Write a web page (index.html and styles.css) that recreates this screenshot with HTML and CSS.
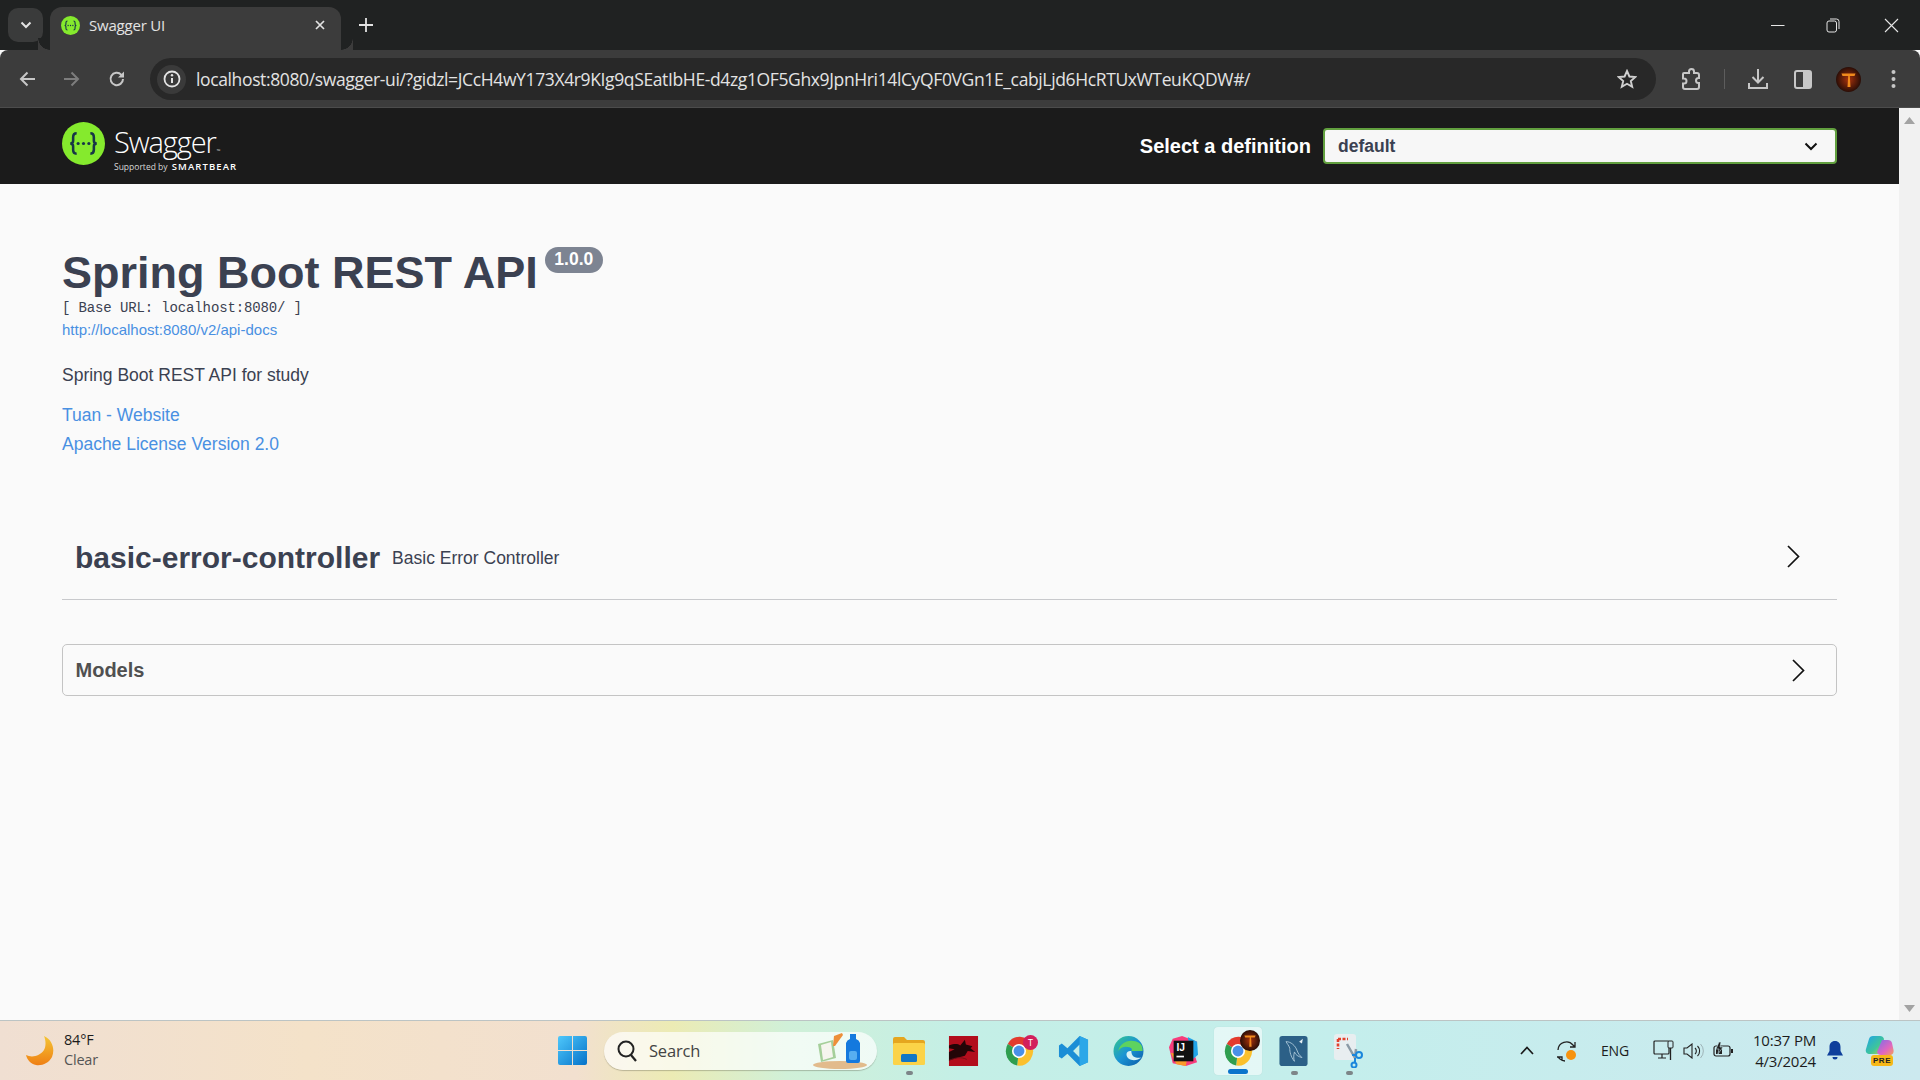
FILE: index.html
```html
<!DOCTYPE html>
<html lang="en">
<head>
<meta charset="utf-8">
<title>Swagger UI</title>
<link rel="stylesheet" href="styles.css">
</head>
<body>
<svg class="defs" width="0" height="0" aria-hidden="true">
  <defs>
    <symbol id="swag" viewBox="0 0 44 44">
      <circle cx="22" cy="22" r="22" fill="#85ea2d"/>
      <path d="M15 11.500c-3.200 0-3.600 1.600-3.600 4v3.600c0 2-1 2.900-3 2.900 2 0 3 .9 3 2.900v3.600c0 2.400.4 4 3.600 4M29 11.500c3.200 0 3.600 1.600 3.600 4v3.600c0 2 1 2.900 3 2.900-2 0-3 .9-3 2.900v3.600c0 2.400-.4 4-3.600 4" fill="none" stroke="#173647" stroke-width="2.600"/>
      <circle cx="16.500" cy="22" r="1.600" fill="#173647"/><circle cx="22" cy="22" r="1.600" fill="#173647"/><circle cx="27.500" cy="22" r="1.600" fill="#173647"/>
    </symbol>
    <symbol id="chromeicon" viewBox="0 0 32 32">
      <path d="M16 16 4 8.500A14.500 15.500 0 0 1 29.500 9.500Z" fill="#e33b2e"/>
      <path d="M16 16 29.500 9.500A15 15.500 0 0 1 14 31.500Z" fill="#fbc02d"/>
      <path d="M16 16 14 31.500A15 15.500 0 0 1 4 8.500Z" fill="#2f9e4f"/>
      <circle cx="16" cy="16" r="7.500" fill="#fff"/><circle cx="16" cy="16" r="5.800" fill="#4a90e8"/>
    </symbol>
    <radialGradient id="avatarfill" cx=".5" cy=".5" r=".55"><stop offset="0" stop-color="#a8320c"/><stop offset="1" stop-color="#1d0a06"/></radialGradient>
    <linearGradient id="moon" x1="0" y1="0" x2="0" y2="1"><stop offset="0" stop-color="#f4c534"/><stop offset="1" stop-color="#ef7f14"/></linearGradient>
    <linearGradient id="winblue" x1="0" y1="0" x2="1" y2="1"><stop offset="0" stop-color="#4fc8fb"/><stop offset="1" stop-color="#0572c9"/></linearGradient>
    <linearGradient id="edgeg" x1="0" y1="0" x2="1" y2="1"><stop offset="0" stop-color="#37c98b"/><stop offset=".5" stop-color="#1a93d4"/><stop offset="1" stop-color="#0c5aa6"/></linearGradient>
    <linearGradient id="copl" x1="0" y1="0" x2="1" y2="1"><stop offset="0" stop-color="#1fa3e8"/><stop offset=".6" stop-color="#3fc59a"/><stop offset="1" stop-color="#c8d845"/></linearGradient>
    <linearGradient id="copr" x1="0" y1="0" x2="1" y2="1"><stop offset="0" stop-color="#7a6fe8"/><stop offset=".6" stop-color="#e066c0"/><stop offset="1" stop-color="#f4a05a"/></linearGradient>
  </defs>
</svg>

<div class="tabstrip">
  <button class="tablist" type="button">
    <svg width="12" height="8" viewBox="0 0 12 8"><path d="M1.500 1.500 6 6l4.500-4.500" fill="none" stroke="#e3e3e3" stroke-width="2"/></svg>
  </button>
  <div class="tab">
    <svg class="favicon" width="19" height="19"><use href="#swag"/></svg>
    <span class="tabtitle">Swagger UI</span>
    <svg class="tabclose" width="10" height="10" viewBox="0 0 10 10"><path d="M1 1l8 8M9 1 1 9" stroke="#e3e3e3" stroke-width="1.700"/></svg>
  </div>
  <svg class="newtab" width="14" height="14" viewBox="0 0 14 14"><path d="M7 0v14M0 7h14" stroke="#e3e3e3" stroke-width="1.800"/></svg>
  <div class="winctrls">
    <svg width="14" height="14" viewBox="0 0 14 14"><path d="M0 7.500h13.500" stroke="#e6e6e6" stroke-width="1"/></svg>
    <svg class="win-restore" width="14" height="16" viewBox="0 0 14 16"><rect x="1" y="4" width="9.500" height="11" rx="2" fill="none" stroke="#e6e6e6"/><path d="M4 2h6.500a2.500 2.500 0 0 1 2.500 2.500V12" fill="none" stroke="#e6e6e6"/></svg>
    <svg width="15" height="15" viewBox="0 0 15 15"><path d="M1 1l13 13M14 1 1 14" stroke="#e6e6e6" stroke-width="1.100"/></svg>
  </div>
</div>

<div class="toolbar">
  <div class="navbtns">
    <svg width="18" height="18" viewBox="0 0 18 18"><path d="M17 9H3M9.500 2.500 3 9l6.500 6.500" fill="none" stroke="#c7c7c7" stroke-width="2"/></svg>
    <svg width="18" height="18" viewBox="0 0 18 18"><path d="M1 9h14M8.500 2.500 15 9l-6.500 6.500" fill="none" stroke="#7d7d7d" stroke-width="2"/></svg>
    <svg width="18" height="18" viewBox="0 0 18 18"><path d="M15 9a6.200 6.200 0 1 1-1.800-4.400L15 6.500" fill="none" stroke="#c7c7c7" stroke-width="2"/><path d="M16 1.500v6h-6z" fill="#c7c7c7"/></svg>
  </div>
  <div class="omnibox">
    <span class="siteinfo">
      <svg width="18" height="18" viewBox="0 0 18 18"><circle cx="9" cy="9" r="7.500" fill="none" stroke="#e3e3e3" stroke-width="1.800"/><path d="M9 8v5" stroke="#e3e3e3" stroke-width="2"/><circle cx="9" cy="5.300" r="1.200" fill="#e3e3e3"/></svg>
    </span>
    <span class="url">localhost:8080/swagger-ui/?gidzl=JCcH4wY173X4r9KIg9qSEatIbHE-d4zg1OF5Ghx9JpnHri14lCyQF0VGn1E_cabjLjd6HcRTUxWTeuKQDW#/</span>
    <svg class="star" width="20" height="20" viewBox="0 0 20 20"><path d="M10 2l2.400 5.500 6 .5-4.600 4 1.400 5.900L10 14.800l-5.200 3.100L6.200 12 1.600 8l6-.5z" fill="none" stroke="#d0d0d0" stroke-width="1.900"/></svg>
  </div>
  <div class="tools">
    <svg class="tool-ext" width="22" height="24" viewBox="0 0 22 24"><path d="M4 6h5V4.500a2.500 2.500 0 0 1 5 0V6h3a2 2 0 0 1 2 2v3h-.5a2.500 2.500 0 0 0 0 5h.5v4a2 2 0 0 1-2 2H5a2 2 0 0 1-2-2v-3.500h1a2.500 2.500 0 0 0 0-5H3V7a1 1 0 0 1 1-1z" fill="none" stroke="#c7c7c7" stroke-width="2"/></svg>
    <span class="tool-sep"></span>
    <svg class="tool-dl" width="22" height="22" viewBox="0 0 22 22"><path d="M11 1v13M5.500 9 11 14.500 16.500 9" fill="none" stroke="#c7c7c7" stroke-width="2"/><path d="M2 15v5h18v-5" fill="none" stroke="#c7c7c7" stroke-width="2"/></svg>
    <svg class="tool-panel" width="18" height="19" viewBox="0 0 18 19"><rect x="1" y="1" width="16" height="17" rx="2" fill="none" stroke="#c7c7c7" stroke-width="2"/><rect x="9" y="1" width="8" height="17" fill="#c7c7c7"/></svg>
    <svg class="tool-avatar" width="25" height="25" viewBox="0 0 25 25"><circle cx="12.500" cy="12.500" r="12.500" fill="url(#avatarfill)"/><path d="M5.500 6.500h14l-1 2.500h-4.700l.7 11h-3l.7-11H6.500z" fill="#f08a1c"/></svg>
    <svg class="tool-dots" width="5" height="20" viewBox="0 0 5 20"><circle cx="2.500" cy="3" r="2" fill="#c7c7c7"/><circle cx="2.500" cy="10" r="2" fill="#c7c7c7"/><circle cx="2.500" cy="17" r="2" fill="#c7c7c7"/></svg>
  </div>
</div>

<div class="viewport">
  <div class="page">
    <header class="topbar">
      <div class="logo">
        <svg class="logomark" width="43" height="43"><use href="#swag"/></svg>
        <div class="logotext">
          <span class="logoname">Swagger<small class="tm">™</small></span>
          <span class="logosub">Supported by <b>SMARTBEAR</b></span>
        </div>
      </div>
      <div class="defsel">
        <span class="deflabel">Select a definition</span>
        <div class="defbox">
          <span>default</span>
          <svg width="14" height="9" viewBox="0 0 14 9"><path d="M1.500 1.500 7 7l5.500-5.500" fill="none" stroke="#111" stroke-width="2"/></svg>
        </div>
      </div>
    </header>

    <main class="content">
      <div class="titlerow">
        <h1 class="title">Spring Boot REST API</h1>
        <span class="version">1.0.0</span>
      </div>
      <p class="baseurl">[ Base URL: localhost:8080/ ]</p>
      <a class="specurl" href="#">http://localhost:8080/v2/api-docs</a>
      <p class="desc">Spring Boot REST API for study</p>
      <a class="infolink first" href="#">Tuan - Website</a>
      <a class="infolink" href="#">Apache License Version 2.0</a>

      <section class="opblock">
        <h2 class="tagname">basic-error-controller</h2>
        <span class="tagdesc">Basic Error Controller</span>
        <svg class="chev" width="13" height="23" viewBox="0 0 13 23"><path d="M1 1l10.500 10.500L1 22" fill="none" stroke="#111" stroke-width="1.700"/></svg>
      </section>

      <section class="models">
        <h3 class="modelsname">Models</h3>
        <svg class="chev" width="13" height="23" viewBox="0 0 13 23"><path d="M1 1l10.500 10.500L1 22" fill="none" stroke="#111" stroke-width="1.700"/></svg>
      </section>
    </main>
  </div>
  <div class="scrollbar">
    <svg width="11" height="7" viewBox="0 0 11 7"><path d="M5.500 0 11 7H0z" fill="#a3a3a3"/></svg>
    <svg width="11" height="7" viewBox="0 0 11 7"><path d="M5.500 7 11 0H0z" fill="#a3a3a3"/></svg>
  </div>
</div>

<footer class="taskbar">
  <div class="weather">
    <svg width="28" height="30" viewBox="0 0 28 30"><path d="M18 0c9 4 11 14 8 21-3 6-10 9-16 8C5 28 1 24 0 19c6 3 14 1 18-5 2-4 2-9 0-14z" fill="url(#moon)"/></svg>
    <div class="weathertext"><span class="temp">84°F</span><span class="cond">Clear</span></div>
  </div>
  <div class="center">
    <svg class="winlogo" width="29" height="29" viewBox="0 0 29 29"><path d="M0 2a2 2 0 0 1 2-2h12v14H0zM15 0h12a2 2 0 0 1 2 2v12H15zM0 15h14v14H2a2 2 0 0 1-2-2zM15 15h14v12a2 2 0 0 1-2 2H15z" fill="url(#winblue)"/></svg>
    <div class="search">
      <svg width="22" height="24" viewBox="0 0 22 24"><circle cx="10" cy="10" r="7.500" fill="none" stroke="#222" stroke-width="2"/><path d="M15 16l5 6" stroke="#222" stroke-width="2.200"/></svg>
      <span class="searchtext">Search</span>
      <svg class="searchart" width="60" height="36" viewBox="0 0 60 36"><ellipse cx="30" cy="32" rx="27" ry="4" fill="#e2bb8c"/><path d="M8 11 23 7l3 18-15 4z" fill="#a5cf9a"/><path d="M11 12l10-3 2 15-10 3z" fill="#f5f5ee"/><path d="M24 3 32 0l1 2-8 11-2 0z" fill="#ed8f3a"/><path d="M36 10a6 6 0 0 1 4-4V1h6v5a6 6 0 0 1 4 4v18a2 2 0 0 1-2 2H38a2 2 0 0 1-2-2z" fill="#1479de"/><rect x="39" y="18" width="8" height="9" rx="2" fill="#57aef0"/></svg>
    </div>
    <div class="apps">
      <div class="app">
        <svg width="32" height="29" viewBox="0 0 32 29"><path d="M0 3a2 2 0 0 1 2-2h9l3 3h16a2 2 0 0 1 2 2v4H0z" fill="#e5a61f"/><rect y="7" width="32" height="22" rx="1.500" fill="#fbd348"/><rect x="8" y="18" width="16" height="8" rx="1.500" fill="#1277c5"/></svg>
        <i class="dot"></i>
      </div>
      <div class="app">
        <svg width="31" height="30" viewBox="0 0 31 32"><rect width="31" height="32" fill="#b20d1c"/><path d="M0 10c6-2 9-2 12 0l5-6 1 5 7 2-2 2 5 4-8-1-3 5-7 2-10 3v-9l6-3-6-1z" fill="#230507"/><path d="M0 26c7-3 13-4 19-1" stroke="#701018" fill="none"/></svg>
      </div>
      <div class="app">
        <svg class="badgeicon" width="30" height="30"><use href="#chromeicon"/></svg>
        <span class="appbadge">T</span>
      </div>
      <div class="app">
        <svg width="31" height="30" viewBox="0 0 31 32"><path d="M22 0 31 4v24l-9 4-13-13-6 5-3-2V10l3-2 6 5zM22 9l-7 7 7 7z" fill="#1b8ed6"/><path d="M22 0 31 4v24l-9 4z" fill="#2ca7e8"/></svg>
      </div>
      <div class="app">
        <svg width="31" height="30" viewBox="0 0 32 32"><circle cx="16" cy="16" r="16" fill="url(#edgeg)"/><path d="M31 14c0-6-6-9-12-9C12 5 6 10 5 16c3-5 8-5 12-4 3 1 3 3 2 4h12z" fill="#5ed25f"/><path d="M19 16c-5-1-7 4-3 8 4 3 10 2 14-1-5 1-11 0-11-7z" fill="#d6f2f5"/></svg>
      </div>
      <div class="app">
        <svg width="31" height="30" viewBox="0 0 31 32"><path d="M4 3 14 0l16 6-2 16 2 6-12 4-14-3L0 12z" fill="#f73d7c"/><path d="M20 1 30 6l1 14-6 5z" fill="#20a4e8"/><path d="M2 18 8 30l10 2 2-12z" fill="#fb9a29"/><rect x="5" y="5" width="21" height="22" fill="#111"/><text x="8" y="16" class="ijtext">IJ</text><rect x="8" y="21" width="8" height="1.800" fill="#fff"/></svg>
      </div>
      <div class="app active">
        <svg class="badgeicon" width="30" height="30"><use href="#chromeicon"/></svg>
        <svg class="avbadge" width="20" height="21" viewBox="0 0 25 25" preserveAspectRatio="none"><circle cx="12.500" cy="12.500" r="12.500" fill="url(#avatarfill)"/><path d="M5.500 6.500h14l-1 2.500h-4.700l.7 11h-3l.7-11H6.500z" fill="#f08a1c"/></svg>
        <i class="bar"></i>
      </div>
      <div class="app">
        <svg width="29" height="30" viewBox="0 0 30 32"><rect width="30" height="32" rx="3" fill="#2c6087"/><path d="M7 6c5 0 10 4 12 10 1 3 3 5 5 7-4-1-7-3-8-6-1 4-1 7 0 10-4-5-5-10-5-14-1-3-3-5-4-7z" fill="none" stroke="#a7c4d6" stroke-width="1"/><path d="M21 6l4-3-1 5z" fill="#e6eef3"/></svg>
        <i class="dot"></i>
      </div>
      <div class="app">
        <svg width="30" height="34" viewBox="0 0 30 34"><rect width="22" height="26" rx="3" fill="#e8eef0"/><path d="M4 5h10M4 5v10" stroke="#e2402c" stroke-width="2.600" stroke-dasharray="3 1.500" fill="none"/><path d="M13 10 21 24M22 15l-1 9" stroke="#8b9aa5" stroke-width="2.500"/><circle cx="25" cy="21" r="3" fill="none" stroke="#1a86dc" stroke-width="2"/><circle cx="20" cy="31" r="2.500" fill="none" stroke="#1a86dc" stroke-width="2"/><path d="M18 21h5M21 24v5" stroke="#1a86dc" stroke-width="2"/></svg>
        <i class="dot"></i>
      </div>
    </div>
  </div>
  <div class="tray">
    <svg class="tray-up" width="14" height="9" viewBox="0 0 14 9"><path d="M1 8l6-6.500L13 8" fill="none" stroke="#1a1a1a" stroke-width="1.700"/></svg>
    <svg class="tray-sync" width="22" height="22" viewBox="0 0 22 22"><path d="M2 10a8.500 8.500 0 0 1 15-5l2 2M19 2v5h-5M1 17h5v4M2 17l2 2a8.500 8.500 0 0 0 5 2" fill="none" stroke="#222" stroke-width="1.300"/><circle cx="15" cy="15" r="5" fill="#f7930f"/></svg>
    <span class="tray-lang">ENG</span>
    <svg class="tray-net" width="21" height="21" viewBox="0 0 21 21"><rect x="1" y="1" width="15" height="13" rx="1" fill="none" stroke="#222" stroke-width="1.200"/><path d="M5 18h8M9 14v4" stroke="#222" stroke-width="1.200"/><rect x="15" y="1" width="5" height="7" rx="1" fill="#cbe9ef" stroke="#222"/><path d="M17.500 8v12" stroke="#222" stroke-width="1.300"/></svg>
    <svg class="tray-vol" width="21" height="16" viewBox="0 0 21 16"><path d="M1 5h3l5-4v14l-5-4H1z" fill="none" stroke="#222" stroke-width="1.100"/><path d="M12 5a4 4 0 0 1 0 6M14.500 3a7 7 0 0 1 0 10" fill="none" stroke="#222" stroke-width="1.100"/><path d="M17.500 1a10 10 0 0 1 0 14" fill="none" stroke="#9fb4b8"/></svg>
    <svg class="tray-bat" width="21" height="17" viewBox="0 0 21 17"><rect x="1" y="4" width="16" height="10" rx="2" fill="none" stroke="#222" stroke-width="1.200"/><rect x="3" y="6" width="6" height="6" fill="#222"/><path d="M18 7h2v4h-2z" fill="#222"/><path d="M6 0 3 7h3l-1 5 5-7H7l1-5z" fill="#222" stroke="#cbe9ef" stroke-width=".6"/></svg>
    <div class="clock"><span>10:37 PM</span><span>4/3/2024</span></div>
    <svg class="tray-bell" width="16" height="19" viewBox="0 0 16 19"><path d="M8 0c3.500 0 5.500 2.500 5.500 6v4l2.500 4.500H0L2.500 10V6C2.500 2.500 4.500 0 8 0z" fill="#0f3f9c"/><path d="M5.500 16h5a2.500 2.500 0 0 1-5 0z" fill="#0f3f9c"/></svg>
    <div class="copilot">
      <svg width="29" height="24" viewBox="0 0 29 24"><path d="M8 0h7c2 0 3.500 1 4 3l-3 12c-.5 2-2 3-4 3H5c-3 0-5-2-4-5L4 3C4.500 1 6 0 8 0z" fill="url(#copl)"/><path d="M17 4h6c2 0 3.500 1 4 3l1.500 7c.5 3-1 5-4 5H16c-2 0-3.500-1-4-3z" fill="url(#copr)"/></svg>
      <span class="prebadge">PRE</span>
    </div>
  </div>
</footer>
</body>
</html>
```

FILE: styles.css
```css
* { box-sizing: border-box; }
html, body { margin: 0; padding: 0; height: 100%; }
body {
  width: 1920px;
  height: 1080px;
  overflow: hidden;
  display: flex;
  flex-direction: column;
  font-family: "Liberation Sans", Arial, sans-serif;
  background: #fafafa;
}
.defs { display: block; height: 0; }

/* browser chrome */
.tabstrip {
  height: 50px;
  flex: none;
  background: #202222;
  display: flex;
  align-items: flex-end;
  padding-left: 8px;
  position: relative;
}
.tablist {
  width: 35px;
  height: 34px;
  margin-bottom: 8px;
  border: 0;
  border-radius: 10px;
  background: #3a3b3b;
  display: flex;
  align-items: center;
  justify-content: center;
  padding: 0;
}
.tab {
  width: 291px;
  height: 43px;
  margin-left: 7px;
  background: #3c3c3c;
  border-radius: 12px 12px 0 0;
  display: flex;
  align-items: center;
  padding: 0 16px 7px 11px;
  color: #e3e3e3;
  position: relative;
}
.tab::before, .tab::after {
  content: "";
  position: absolute;
  bottom: 0;
  width: 12px;
  height: 12px;
  background: radial-gradient(circle at 0 0, #202222 11.5px, #3c3c3c 12px);
}
.tab::before { left: -12px; transform: scaleX(-1); }
.tab::after { right: -12px; }
.favicon { flex: none; }
.tabtitle {
  margin-left: 9px;
  flex: 1;
  font: 15px "Open Sans", sans-serif;
  letter-spacing: -0.2px;
}
.newtab { margin: 0 0 18px 18px; flex: none; }
.winctrls {
  margin-left: auto;
  display: flex;
  align-items: center;
  gap: 41px;
  height: 50px;
  padding: 0 21px 0 0;
  align-self: flex-start;
}
.win-restore { margin-right: 3px; }

.toolbar {
  height: 58px;
  flex: none;
  background: #3c3c3c;
  border-bottom: 1px solid #4c4c4c;
  border-top-left-radius: 8px;
  border-top-right-radius: 8px;
  display: flex;
  align-items: center;
  padding: 1px 0 0 18px;
}
.navbtns { display: flex; gap: 27px; align-items: center; flex: none; width: 132px; }
.omnibox {
  width: 1506px;
  height: 42px;
  background: #282828;
  border-radius: 21px;
  display: flex;
  align-items: center;
  padding: 0 19px 0 7px;
  flex: none;
}
.siteinfo {
  width: 29px;
  height: 29px;
  border-radius: 50%;
  background: #3a3a3a;
  display: flex;
  align-items: center;
  justify-content: center;
  flex: none;
}
.url {
  margin-left: 10px;
  flex: 1;
  font: 17.500px "Open Sans", sans-serif;
  letter-spacing: -0.37px;
  color: #e3e3e3;
  white-space: nowrap;
}
.star { flex: none; }
.tools { display: flex; align-items: center; flex: none; padding-left: 24px; }
.tool-sep { width: 1px; height: 20px; background: #5d5d5d; margin: 0 22px 0 22px; }
.tool-panel { margin-left: 25px; }
.tool-avatar { margin-left: 24px; }
.tool-dots { margin-left: 30px; }

/* page */
.viewport { flex: 1; display: flex; min-height: 0; }
.page { flex: 1; min-width: 0; background: #fafafa; color: #3b4151; }
.scrollbar {
  width: 21px;
  flex: none;
  background: #f1f1f1;
  display: flex;
  flex-direction: column;
  align-items: center;
  justify-content: space-between;
  padding: 9px 0 8px;
}
.topbar {
  height: 76px;
  background: #1b1b1b;
  display: flex;
  align-items: center;
  justify-content: space-between;
  padding: 0 62px 0 62px;
}
.logo { display: flex; align-items: center; gap: 9px; }
.logomark { display: block; margin-bottom: 5px; }
.logotext { display: flex; flex-direction: column; color: #fff; margin-top: 12px; }
.logoname { font: 300 29px/20px "Open Sans", sans-serif; letter-spacing: -1.100px; }
.tm { font-size: 5px; vertical-align: baseline; margin-left: 1px; }
.logosub { font: 8.500px/11px "Open Sans", sans-serif; color: #d8d8d8; }
.logosub b { font-size: 9.500px; font-weight: 600; letter-spacing: 1.100px; color: #fff; margin-left: 2px; }
.defsel { display: flex; align-items: center; gap: 12px; }
.deflabel { font-weight: 700; font-size: 20px; color: #fff; }
.defbox {
  width: 514px;
  height: 36px;
  background: #f7f7f7;
  border: 2px solid #62a03f;
  border-radius: 4px;
  display: flex;
  align-items: center;
  justify-content: space-between;
  padding: 0 17px 0 13px;
  font-weight: 700;
  font-size: 17.500px;
  color: #3b4151;
}
.content { padding: 0 0 0 62px; width: 1837px; }
.titlerow { display: flex; align-items: flex-start; margin-top: 65px; height: 48px; }
.title { margin: 0; font-size: 45px; line-height: 48px; font-weight: 700; color: #3b4151; }
.version {
  margin: -2px 0 0 7px;
  width: 58px;
  height: 26px;
  border-radius: 13px;
  background: #7d8492;
  color: #fff;
  font-weight: 700;
  font-size: 17.500px;
  line-height: 24px;
  text-align: center;
}
.baseurl {
  margin: 0;
  height: 21.500px;
  font: 14px/22px "Liberation Mono", monospace;
  letter-spacing: -0.13px;
  color: #3b4151;
}
.specurl { display: block; font-size: 15px; line-height: 22px; color: #4990e2; text-decoration: none; }
.desc { margin: 22px 0 0; font-size: 17.500px; line-height: 24px; color: #3b4151; }
.infolink { display: block; font-size: 17.500px; line-height: 29px; color: #4990e2; text-decoration: none; }
.infolink.first { margin-top: 14px; }
.opblock {
  margin-top: 58.500px;
  height: 83px;
  border-bottom: 1px solid #c8c9cc;
  display: flex;
  align-items: center;
  padding: 0 0 0 13px;
  width: 1775px;
}
.tagname { margin: 0; font-size: 30px; font-weight: 700; color: #3b4151; line-height: 40px; }
.tagdesc { margin-left: 12px; font-size: 17.500px; color: #3b4151; }
.opblock .chev { margin-left: auto; margin-right: 37px; margin-top: -4px; }
.models {
  margin-top: 44px;
  height: 52px;
  width: 1775px;
  border: 1px solid #c4c4c4;
  border-radius: 5px;
  display: flex;
  align-items: center;
  padding: 0 31px 0 12.500px;
  justify-content: space-between;
}
.modelsname { margin: 0; font-size: 20px; font-weight: 700; color: #505050; }

/* taskbar */
.taskbar {
  height: 60px;
  flex: none;
  display: flex;
  align-items: center;
  border-top: 1px solid #bcc4c4;
  background: linear-gradient(90deg, #f0dfd2 0, #f4e2c9 16%, #f2e0cf 30%, #ecebb4 35%, #d0f0d8 41%, #c4efe6 50%, #c4eeec 70%, #cce9ef 100%);
  color: #1c1c1c;
  font-family: "Open Sans", sans-serif;
}
.weather { display: flex; align-items: center; width: 558px; padding-left: 26px; flex: none; }
.weathertext { display: flex; flex-direction: column; margin-left: 10px; font-size: 14.500px; line-height: 19.500px; letter-spacing: -.2px; margin-top: -2px; }
.cond { color: #555; }
.center { display: flex; align-items: center; flex: none; }
.search {
  margin-left: 17px;
  width: 273px;
  height: 38px;
  border-radius: 19px;
  background: rgba(255,255,255,.7);
  box-shadow: 0 1px 1px rgba(90,90,70,.35);
  display: flex;
  align-items: center;
  padding: 0 7px 0 12px;
  flex: none;
}
.searchtext { margin-left: 11px; font-size: 16.500px; color: #444; letter-spacing: -.2px; flex: 1; }
.apps { display: flex; margin-left: 4px; }
.app {
  width: 55px;
  height: 48px;
  display: flex;
  align-items: center;
  justify-content: center;
  position: relative;
}
.app svg { display: block; }
.dot {
  position: absolute;
  left: 50%;
  bottom: 0;
  width: 7px;
  height: 4px;
  margin-left: -3px;
  border-radius: 2px;
  background: #7d8588;
}
.active { background: rgba(255,255,255,.55); border-radius: 4px; width: 48px; margin: 0 4px 0 3px; box-shadow: 0 0 1px rgba(0,0,0,.15); }
.bar {
  position: absolute;
  left: 14px;
  bottom: 1px;
  width: 20px;
  height: 5px;
  border-radius: 3px;
  background: #0a74cc;
}
.badgeicon { position: relative; }
.appbadge {
  position: absolute;
  top: 8px;
  right: 8px;
  width: 15px;
  height: 15px;
  border-radius: 50%;
  background: #d21f5c;
  color: #fff;
  font: 9px/15px "Open Sans", sans-serif;
  text-align: center;
}
.avbadge { position: absolute; top: 3px; right: 2px; }
.ijtext { font: 700 11px "Liberation Sans", sans-serif; fill: #fff; }
.tray { display: flex; align-items: center; flex: 1; padding-left: 144px; }
.tray-sync { margin-left: 22px; }
.tray-lang { margin-left: 23px; font-size: 14px; letter-spacing: -.2px; width: 36px; }
.tray-net { margin-left: 16px; }
.tray-vol { margin-left: 9px; }
.tray-bat { margin-left: 9px; }
.clock {
  margin-left: 18px;
  width: 64px;
  display: flex;
  flex-direction: column;
  align-items: flex-end;
  font-size: 15px;
  line-height: 21px;
  letter-spacing: -.2px;
  white-space: nowrap;
}
.tray-bell { margin-left: 11px; }
.copilot { margin-left: 22px; width: 29px; height: 30px; position: relative; }
.copilot svg { display: block; }
.prebadge {
  position: absolute;
  left: 6px;
  bottom: 0;
  width: 22px;
  height: 11px;
  border-radius: 3px;
  background: #f6b818;
  color: #222;
  font: 700 8px/11px "Liberation Sans", sans-serif;
  text-align: center;
  letter-spacing: .5px;
}
```
